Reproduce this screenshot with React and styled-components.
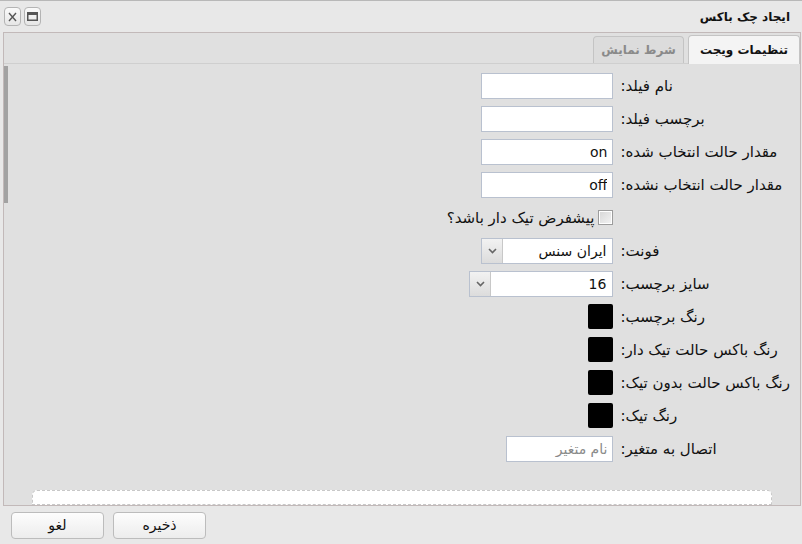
import React from 'react';
import styled, { createGlobalStyle } from 'styled-components';

const GlobalStyle = createGlobalStyle`
  html, body {
    margin: 0;
    padding: 0;
    background: #e8e8e8;
  }
  * {
    box-sizing: border-box;
  }
`;

const Window = styled.div`
  width: 802px;
  height: 544px;
  display: flex;
  flex-direction: column;
  background: #e8e8e8;
  border-top: 1px solid #b8b8b8;
  font-family: 'DejaVu Sans', Tahoma, sans-serif;
  font-size: 15px;
  color: #111;
  overflow: hidden;
`;

const TitleBar = styled.div`
  height: 31px;
  display: flex;
  align-items: center;
  justify-content: space-between;
  padding: 0 12px 0 4px;
`;

const TitleButtons = styled.div`
  display: flex;
  gap: 3px;
`;

const TitleButton = styled.button`
  width: 17px;
  height: 19px;
  padding: 0;
  display: flex;
  align-items: center;
  justify-content: center;
  border: 1px solid #b4b4b4;
  border-radius: 4px;
  background: linear-gradient(#fafafa, #e6e6e6);
  color: #555;
`;

const Title = styled.div`
  font-weight: bold;
  font-size: 12px;
  direction: rtl;
`;

const Panel = styled.div`
  flex: 1;
  margin: 0 1px 0 3px;
  display: flex;
  flex-direction: column;
  border: 1px solid #c2b9b9;
  background: #e0e0e0;
  min-height: 0;
`;

const TabStrip = styled.div`
  height: 31px;
  display: flex;
  direction: rtl;
  align-items: flex-end;
  gap: 4px;
  border-bottom: 1px solid #cfcfcf;
`;

const Tab = styled.div`
  height: ${(p) => (p.$active ? '29px' : '27px')};
  width: ${(p) => (p.$active ? '112px' : '91px')};
  display: flex;
  align-items: center;
  justify-content: center;
  font-weight: bold;
  font-size: 12px;
  color: ${(p) => (p.$active ? '#111' : '#8a8a8a')};
  background: ${(p) => (p.$active ? '#f4f4f4' : '#dcdcdc')};
  border: 1px solid #c4c4c4;
  border-bottom: none;
  border-radius: 4px 4px 0 0;
  margin-bottom: ${(p) => (p.$active ? '-1px' : '0')};
`;

const Content = styled.div`
  flex: 1;
  position: relative;
  overflow: hidden;
  display: flex;
  flex-direction: column;
  padding: 5px 10px 0 28px;
`;

const ScrollThumb = styled.div`
  position: absolute;
  left: 0;
  top: 2px;
  width: 4px;
  height: 137px;
  background: #a2a2a2;
`;

const Form = styled.div`
  direction: rtl;
  display: grid;
  grid-template-columns: auto 1fr;
  grid-auto-rows: 33px;
  align-items: center;
  column-gap: 7px;
`;

const Label = styled.label`
  justify-self: end;
  white-space: nowrap;
`;

const Control = styled.div`
  justify-self: start;
  display: flex;
  align-items: center;
`;

const TextInput = styled.input`
  width: ${(p) => p.$width || 132}px;
  height: 26px;
  border: 1px solid #b9c1cf;
  background: #fff;
  padding: 0 5px;
  font-family: inherit;
  font-size: 14px;
  direction: rtl;
  color: #111;
  outline: none;
  &::placeholder {
    color: #8a8a8a;
  }
`;

const Select = styled.div`
  width: ${(p) => p.$width}px;
  height: 26px;
  display: flex;
  border: 1px solid #b9c1cf;
  background: #fff;
  font-size: 14px;
`;

const SelectValue = styled.div`
  flex: 1;
  display: flex;
  align-items: center;
  padding: 0 6px;
`;

const SelectArrow = styled.div`
  width: 21px;
  display: flex;
  align-items: center;
  justify-content: center;
  background: linear-gradient(#f2f2f2, #dcdcdc);
  border-right: 1px solid #c8c8c8;
`;

const CheckRow = styled.label`
  grid-column: 2;
  justify-self: start;
  display: flex;
  align-items: center;
  gap: 4px;
  white-space: nowrap;
`;

const CheckBox = styled.span`
  width: 15px;
  height: 15px;
  border: 1px solid #9c9c9c;
  background: linear-gradient(135deg, #d6d6d6, #f4f4f4);
  box-shadow: inset 0 0 0 1px #fff;
`;

const Swatch = styled.div`
  width: 25px;
  height: 25px;
  background: #000;
  border-radius: 2px;
`;

const DropZone = styled.div`
  margin: 25px 18px 0 0;
  height: 30px;
  background: #fff;
  border: 1px dashed #c8c8c8;
  border-radius: 5px 5px 0 0;
`;

const Footer = styled.div`
  height: 38px;
  display: flex;
  align-items: center;
  gap: 9px;
  padding: 0 11px;
`;

const FooterButton = styled.button`
  width: 93px;
  height: 27px;
  border: 1px solid #bcbcbc;
  border-radius: 4px;
  background: linear-gradient(#fdfdfd, #ececec);
  font-family: inherit;
  font-size: 14px;
  color: #111;
  direction: rtl;
`;

const Chevron = () => (
  <svg width="9" height="6" viewBox="0 0 9 6">
    <path d="M1 1 L4.5 4.5 L8 1" fill="none" stroke="#666" strokeWidth="1.6" />
  </svg>
);

const fields = [
  { label: 'نام فیلد:', value: '' },
  { label: 'برچسب فیلد:', value: '' },
  { label: 'مقدار حالت انتخاب شده:', value: 'on' },
  { label: 'مقدار حالت انتخاب نشده:', value: 'off' },
];

const colors = ['رنگ برچسب:', 'رنگ باکس حالت تیک دار:', 'رنگ باکس حالت بدون تیک:', 'رنگ تیک:'];

const App = () => {
  return (
    <>
      <GlobalStyle />
      <Window>
        <TitleBar>
          <TitleButtons>
            <TitleButton>
              <svg width="9" height="10" viewBox="0 0 9 10">
                <path d="M1 1 L8 9 M8 1 L1 9" stroke="#555" strokeWidth="1.4" />
              </svg>
            </TitleButton>
            <TitleButton>
              <svg width="11" height="9" viewBox="0 0 11 9">
                <rect x="0.75" y="0.75" width="9.5" height="7.5" fill="none" stroke="#555" strokeWidth="1.5" />
                <rect x="1" y="1" width="9" height="2" fill="#555" />
              </svg>
            </TitleButton>
          </TitleButtons>
          <Title>ایجاد چک باکس</Title>
        </TitleBar>
        <Panel>
          <TabStrip>
            <Tab $active>تنظیمات ویجت</Tab>
            <Tab>شرط نمایش</Tab>
          </TabStrip>
          <Content>
            <ScrollThumb />
            <Form>
              {fields.map((f) => (
                <React.Fragment key={f.label}>
                  <Label>{f.label}</Label>
                  <Control>
                    <TextInput defaultValue={f.value} />
                  </Control>
                </React.Fragment>
              ))}
              <CheckRow>
                <CheckBox />
                پیشفرض تیک دار باشد؟
              </CheckRow>
              <Label>فونت:</Label>
              <Control>
                <Select $width={132}>
                  <SelectValue>ایران سنس</SelectValue>
                  <SelectArrow><Chevron /></SelectArrow>
                </Select>
              </Control>
              <Label>سایز برچسب:</Label>
              <Control>
                <Select $width={144}>
                  <SelectValue>16</SelectValue>
                  <SelectArrow><Chevron /></SelectArrow>
                </Select>
              </Control>
              {colors.map((c) => (
                <React.Fragment key={c}>
                  <Label>{c}</Label>
                  <Control>
                    <Swatch />
                  </Control>
                </React.Fragment>
              ))}
              <Label>اتصال به متغیر:</Label>
              <Control>
                <TextInput $width={107} placeholder="نام متغیر" />
              </Control>
            </Form>
            <DropZone />
          </Content>
        </Panel>
        <Footer>
          <FooterButton>لغو</FooterButton>
          <FooterButton>ذخیره</FooterButton>
        </Footer>
      </Window>
    </>
  );
};

export default App;
